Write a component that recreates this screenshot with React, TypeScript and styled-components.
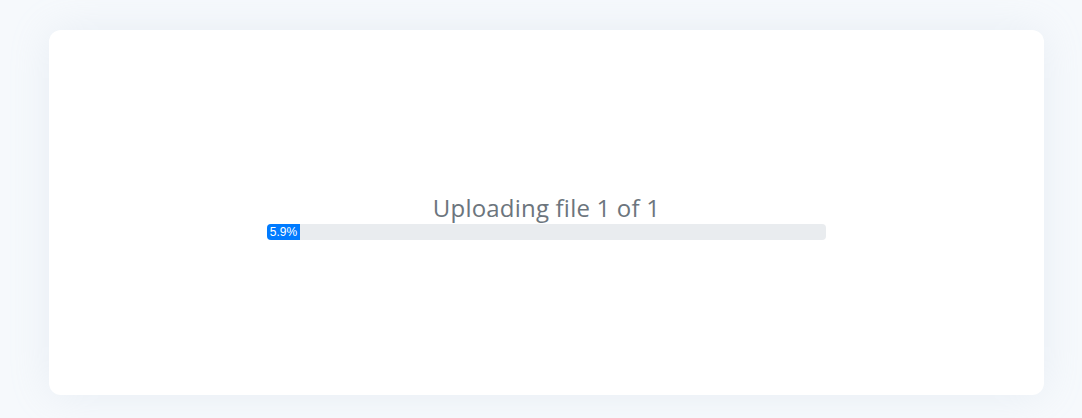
import React from "react";
import styled, { createGlobalStyle } from "styled-components";

const Global = createGlobalStyle`
  html, body { margin: 0; padding: 0; }
  body {
    background: #f6f9fc;
    font-family: "Open Sans", "Liberation Sans", sans-serif;
  }
`;

const Page = styled.div`
  box-sizing: border-box;
  width: 1082px;
  height: 418px;
  padding: 30px 38px 23px 49px;
  display: flex;
`;

const Card = styled.div`
  flex: 1;
  background: #ffffff;
  border-radius: 12px;
  box-shadow: 0 0 40px rgba(180, 195, 215, 0.2);
  display: flex;
  align-items: center;
  justify-content: center;
`;

const Uploader = styled.div`
  width: 559px;
  display: flex;
  flex-direction: column;
  align-items: center;
  margin-top: 8px;
`;

const Title = styled.h3`
  margin: 0 0 2px;
  font-family: "Open Sans", "Liberation Sans", sans-serif;
  font-weight: 400;
  font-size: 24px;
  line-height: 29px;
  color: #6c757d;
  letter-spacing: 0.2px;
`;

const Track = styled.div`
  align-self: stretch;
  height: 16px;
  background: #e9ecef;
  border-radius: 4px;
  overflow: hidden;
  display: flex;
`;

const Bar = styled.div`
  background: #007bff;
  color: #ffffff;
  font-family: "Liberation Sans", Arial, sans-serif;
  font-size: 12px;
  line-height: 16px;
  display: flex;
  justify-content: center;
  white-space: nowrap;
`;

export default function App() {
  const pct = 5.9;
  return (
    <>
      <Global />
      <Page>
        <Card>
          <Uploader>
            <Title>Uploading file 1 of 1</Title>
            <Track>
              <Bar style={{ width: `${pct}%` }}>{pct}%</Bar>
            </Track>
          </Uploader>
        </Card>
      </Page>
    </>
  );
}
